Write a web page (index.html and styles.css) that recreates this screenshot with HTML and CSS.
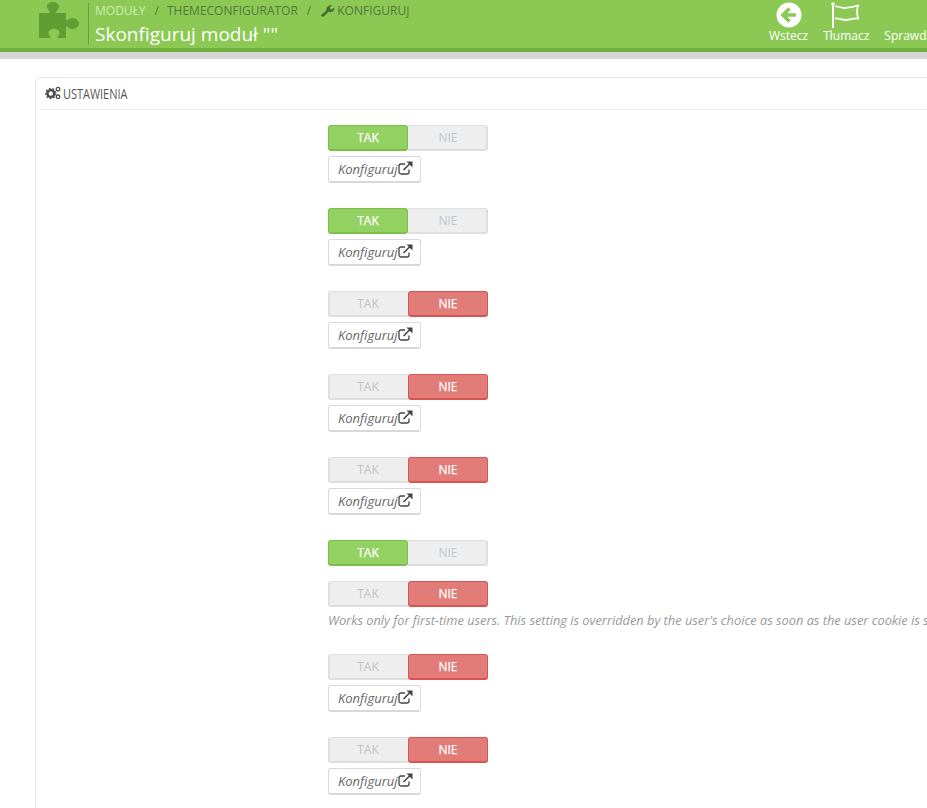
FILE: index.html
```html
<!DOCTYPE html>
<html lang="pl">
<head>
<meta charset="utf-8">
<title>Skonfiguruj moduł</title>
<link rel="stylesheet" href="styles.css">
</head>
<body>
<header class="head">
  <div class="head-main">
    <svg class="puzzle" viewBox="0 0 40 36" width="40" height="36"><path fill="#5f9e33" d="M0 11H10c1 0 1.200-.8.6-1.600C9 7.500 8 6 8 4.500 8 1.800 10.800 0 14 0s6 1.800 6 4.500c0 1.500-1 3-2.600 4.900-.6.800-.4 1.600.6 1.600H27v6.500c0 1 .8 1.200 1.600.6 1.500-1.200 2.900-2.100 4.400-2.100 3.900 0 7 2.500 7 5.500s-3.100 5.500-7 5.500c-1.500 0-2.900-.9-4.400-2.100-.8-.6-1.600-.4-1.600.6V36h-7.500c-1 0-1.200-.8-.6-1.600 1.100-1.300 1.600-2.500 1.600-3.700 0-2.300-2.400-4-5.500-4s-5.500 1.700-5.500 4c0 1.200.5 2.400 1.600 3.700.6.800.4 1.600-.6 1.600H0z"/></svg>
    <div class="head-text">
      <nav class="crumbs"><span class="crumb-first">MODUŁY</span><span class="sep">/</span><span>THEMECONFIGURATOR</span><span class="sep">/</span><svg class="wrench" viewBox="0 0 14 12" width="14" height="12"><path fill="#4d6b30" d="M0.800 11.600c-.8-.5-1-1.200-.4-1.800l5-4.300C5 3.500 5.800 1.500 7.800.7 9 .2 10.200.2 11 .5L8.800 2.500l.5 1.600 1.700.4L13.200 2.600c.4 1.200 0 2.800-1.200 3.700-1.300 1-2.900 1.100-4.300.4l-5 4.700c-.6.500-1.300.6-1.900.2z"/></svg><span>KONFIGURUJ</span></nav>
      <h1 class="title">Skonfiguruj moduł ""</h1>
    </div>
  </div>
  <div class="tools">
    <a class="tool">
      <svg viewBox="0 0 26 26" width="26" height="26"><circle cx="13" cy="13" r="12.500" fill="#fff"/><path fill="none" stroke="#8bc954" stroke-width="3.600" d="M13.500 6.500 7 13l6.500 6.500M7.500 13H20"/></svg>
      <span>Wstecz</span>
    </a>
    <a class="tool">
      <svg viewBox="0 0 30 26" width="30" height="26"><path fill="none" stroke="#fff" stroke-width="1.800" d="M4 4.500c3-1 5 1.500 9 1.500 4.500 0 8-1 14-2.500-.8 3-1.200 5-.8 8 .2 2 .5 3.500.8 5-4-.5-8 1.500-12.500 1.500-4 0-6.500-2-10.500-1.500"/><path fill="none" stroke="#fff" stroke-width="2" d="M2 2v24"/><circle cx="2" cy="2" r="1.800" fill="#fff"/></svg>
      <span>Tłumacz</span>
    </a>
    <a class="tool">
      <span class="tool-gap"></span>
      <span>Sprawdź</span>
    </a>
  </div>
</header>
<div class="band"></div>
<main class="panel">
  <div class="panel-head">
    <svg class="cogs" viewBox="0 0 16 14" width="16" height="14"><g fill="none" stroke="#4a4a4a"><circle cx="5.800" cy="7.500" r="3.400" stroke-width="2.400"/><circle cx="5.800" cy="7.500" r="5" stroke-width="1.400" stroke-dasharray="1.800 1.700"/><circle cx="13" cy="3.200" r="1.800" stroke-width="1.300"/><circle cx="13" cy="10.800" r="1.800" stroke-width="1.300"/></g></svg>
    <span class="panel-title">USTAWIENIA</span>
  </div>
  <div class="rows">
    <section class="row">
      <div class="switch"><span class="opt on-yes">TAK</span><span class="opt off-no">NIE</span></div>
      <a class="btn"><em>Konfiguruj</em><svg viewBox="0 0 15 14" width="15" height="14"><path fill="none" stroke="#444" stroke-width="1.300" d="M11 8.500V11a2 2 0 0 1-2 2H3a2 2 0 0 1-2-2V5a2 2 0 0 1 2-2h4"/><path fill="none" stroke="#444" stroke-width="1.600" d="M5.500 9 12.500 2"/><path fill="#444" d="M8.500 0.500H14.500V6.500z"/></svg></a>
    </section>
    <section class="row">
      <div class="switch"><span class="opt on-yes">TAK</span><span class="opt off-no">NIE</span></div>
      <a class="btn"><em>Konfiguruj</em><svg viewBox="0 0 15 14" width="15" height="14"><path fill="none" stroke="#444" stroke-width="1.300" d="M11 8.500V11a2 2 0 0 1-2 2H3a2 2 0 0 1-2-2V5a2 2 0 0 1 2-2h4"/><path fill="none" stroke="#444" stroke-width="1.600" d="M5.500 9 12.500 2"/><path fill="#444" d="M8.500 0.500H14.500V6.500z"/></svg></a>
    </section>
    <section class="row">
      <div class="switch"><span class="opt off-yes">TAK</span><span class="opt on-no">NIE</span></div>
      <a class="btn"><em>Konfiguruj</em><svg viewBox="0 0 15 14" width="15" height="14"><path fill="none" stroke="#444" stroke-width="1.300" d="M11 8.500V11a2 2 0 0 1-2 2H3a2 2 0 0 1-2-2V5a2 2 0 0 1 2-2h4"/><path fill="none" stroke="#444" stroke-width="1.600" d="M5.500 9 12.500 2"/><path fill="#444" d="M8.500 0.500H14.500V6.500z"/></svg></a>
    </section>
    <section class="row">
      <div class="switch"><span class="opt off-yes">TAK</span><span class="opt on-no">NIE</span></div>
      <a class="btn"><em>Konfiguruj</em><svg viewBox="0 0 15 14" width="15" height="14"><path fill="none" stroke="#444" stroke-width="1.300" d="M11 8.500V11a2 2 0 0 1-2 2H3a2 2 0 0 1-2-2V5a2 2 0 0 1 2-2h4"/><path fill="none" stroke="#444" stroke-width="1.600" d="M5.500 9 12.500 2"/><path fill="#444" d="M8.500 0.500H14.500V6.500z"/></svg></a>
    </section>
    <section class="row">
      <div class="switch"><span class="opt off-yes">TAK</span><span class="opt on-no">NIE</span></div>
      <a class="btn"><em>Konfiguruj</em><svg viewBox="0 0 15 14" width="15" height="14"><path fill="none" stroke="#444" stroke-width="1.300" d="M11 8.500V11a2 2 0 0 1-2 2H3a2 2 0 0 1-2-2V5a2 2 0 0 1 2-2h4"/><path fill="none" stroke="#444" stroke-width="1.600" d="M5.500 9 12.500 2"/><path fill="#444" d="M8.500 0.500H14.500V6.500z"/></svg></a>
    </section>
    <section class="row row-short">
      <div class="switch"><span class="opt on-yes">TAK</span><span class="opt off-no">NIE</span></div>
    </section>
    <section class="row row-help">
      <div class="switch"><span class="opt off-yes">TAK</span><span class="opt on-no">NIE</span></div>
      <p class="help">Works only for first-time users. This setting is overridden by the user's choice as soon as the user cookie is set.</p>
    </section>
    <section class="row">
      <div class="switch"><span class="opt off-yes">TAK</span><span class="opt on-no">NIE</span></div>
      <a class="btn"><em>Konfiguruj</em><svg viewBox="0 0 15 14" width="15" height="14"><path fill="none" stroke="#444" stroke-width="1.300" d="M11 8.500V11a2 2 0 0 1-2 2H3a2 2 0 0 1-2-2V5a2 2 0 0 1 2-2h4"/><path fill="none" stroke="#444" stroke-width="1.600" d="M5.500 9 12.500 2"/><path fill="#444" d="M8.500 0.500H14.500V6.500z"/></svg></a>
    </section>
    <section class="row">
      <div class="switch"><span class="opt off-yes">TAK</span><span class="opt on-no">NIE</span></div>
      <a class="btn"><em>Konfiguruj</em><svg viewBox="0 0 15 14" width="15" height="14"><path fill="none" stroke="#444" stroke-width="1.300" d="M11 8.500V11a2 2 0 0 1-2 2H3a2 2 0 0 1-2-2V5a2 2 0 0 1 2-2h4"/><path fill="none" stroke="#444" stroke-width="1.600" d="M5.500 9 12.500 2"/><path fill="#444" d="M8.500 0.500H14.500V6.500z"/></svg></a>
    </section>
  </div>
</main>
</body>
</html>
```
FILE: styles.css
```css
html, body {
  margin: 0;
  padding: 0;
  height: 808px;
  overflow: hidden;
  background: #fff;
  font-family: "Open Sans", "Liberation Sans", sans-serif;
}
.head {
  display: flex;
  height: 48px;
  background: #8bc954;
  border-bottom: 4px solid #72b03c;
  overflow: hidden;
}
.head-main {
  flex: 0 0 769px;
  display: flex;
  padding-left: 39px;
  box-sizing: border-box;
}
.puzzle {
  margin-top: 2px;
}
.head-text {
  margin-left: 9px;
  margin-top: 3px;
  height: 42px;
  padding-left: 6px;
  border-left: 1px solid #6a9e3e;
}
.crumbs {
  display: flex;
  align-items: center;
  height: 16px;
  font-size: 12px;
  line-height: 16px;
  color: #56763a;
}
.crumb-first {
  color: #cfe9b5;
}
.sep {
  margin: 0 8px 0 9px;
}
.wrench {
  margin: 0 2px 0 2px;
}
.title {
  margin: 3px 0 0;
  font-size: 19px;
  font-weight: 400;
  line-height: 24px;
  color: #fff;
}
.tools {
  flex: 0 0 auto;
  display: flex;
  gap: 15px;
  padding-top: 2px;
}
.tool {
  display: flex;
  flex-direction: column;
  align-items: center;
  color: #fff;
  font-size: 12px;
  line-height: 15px;
}
.tool svg, .tool-gap {
  display: block;
  height: 26px;
}
.tool span {
  white-space: nowrap;
}
.band {
  height: 7px;
  background: #d5d5d5;
}
.panel {
  margin: 18px 0 0 35px;
  width: 1000px;
  height: 780px;
  box-sizing: border-box;
  border: 1px solid #e6e6e6;
  border-radius: 5px;
  padding: 0 4px;
}
.panel-head {
  display: flex;
  align-items: center;
  gap: 2px;
  height: 29px;
  padding-left: 5px;
  padding-bottom: 2px;
  border-bottom: 1px solid #eee;
}
.cogs {
  flex: none;
}
.panel-title {
  font-size: 15px;
  color: #555;
  display: inline-block;
  transform: scaleX(.73);
  transform-origin: left center;
}
.rows {
  padding: 15px 0 0 288px;
}
.row {
  display: flex;
  flex-direction: column;
  align-items: flex-start;
  height: 83px;
}
.row-short {
  height: 41px;
}
.row-help {
  height: 73px;
}
.switch {
  display: flex;
  width: 160px;
  height: 26px;
}
.opt {
  flex: 0 0 80px;
  box-sizing: border-box;
  text-align: center;
  font-size: 12px;
  font-weight: 400;
  line-height: 24px;
  border-radius: 3px;
}
.on-yes {
  background: #93d162;
  border: 1px solid #7cc04a;
  border-bottom-width: 2px;
  color: #fff;
  -webkit-text-stroke: .25px #fff;
}
.on-no {
  background: #e27c79;
  border: 1px solid #d9534f;
  border-bottom-width: 2px;
  color: #fff;
  -webkit-text-stroke: .25px #fff;
}
.off-yes, .off-no {
  background: #eee;
  border: 2px solid #dedede;
  border-top-width: 1px;
  color: #c2c2c2;
}
.off-yes {
  border-right: 0;
  border-top-right-radius: 0;
  border-bottom-right-radius: 0;
  padding-right: 2px;
}
.off-no {
  border-left: 0;
  border-top-left-radius: 0;
  border-bottom-left-radius: 0;
  padding-left: 2px;
  color: #bcc6cf;
}
.btn {
  display: flex;
  align-items: center;
  box-sizing: border-box;
  width: 93px;
  height: 27px;
  margin-top: 5px;
  padding-left: 9px;
  background: #fff;
  border: 1px solid #d9d9d9;
  border-bottom-width: 2px;
  border-radius: 3px;
  color: #666;
  font-size: 13px;
}
.btn svg {
  flex: none;
  margin-top: -3px;
}
.help {
  margin: 4px 0 0;
  font-size: 12.800px;
  font-style: italic;
  line-height: 18px;
  color: #999;
  white-space: nowrap;
}
```
